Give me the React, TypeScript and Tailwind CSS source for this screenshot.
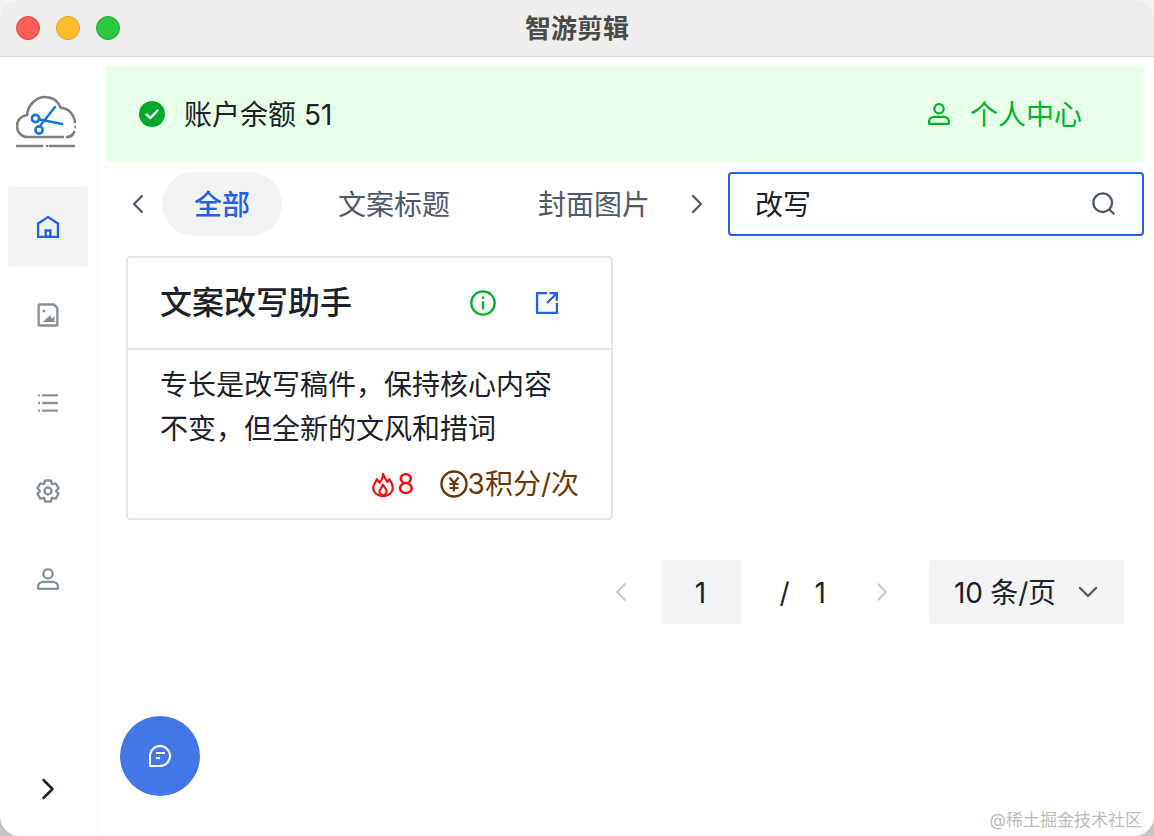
import { ChevronDown, ChevronLeft, ChevronRight } from 'lucide-react';

const NAV_PATHS = {
  settings:
    'M18.797 6.732A1 1 0 0 1 19.76 6h8.48a1 1 0 0 1 .964.732l1.285 4.628a1 1 0 0 0 1.213.7l4.651-1.2a1 1 0 0 1 1.116.468l4.24 7.344a1 1 0 0 1-.153 1.2L38.193 23.3a1 1 0 0 0 0 1.402l3.364 3.427a1 1 0 0 1 .153 1.2l-4.24 7.344a1 1 0 0 1-1.116.468l-4.65-1.2a1 1 0 0 0-1.214.7l-1.285 4.628a1 1 0 0 1-.964.732h-8.48a1 1 0 0 1-.963-.732L17.51 36.64a1 1 0 0 0-1.213-.7l-4.65 1.2a1 1 0 0 1-1.116-.468l-4.24-7.344a1 1 0 0 1 .153-1.2L9.809 24.7a1 1 0 0 0 0-1.402l-3.364-3.427a1 1 0 0 1-.153-1.2l4.24-7.344a1 1 0 0 1 1.116-.468l4.65 1.2a1 1 0 0 0 1.213-.7l1.286-4.628Z',
  user: 'M7 37c0-4.97 4.03-8 9-8h16c4.97 0 9 3.03 9 8v3a1 1 0 0 1-1 1H8a1 1 0 0 1-1-1v-3Z',
  search:
    'M33.072 33.071c6.248-6.248 6.248-16.379 0-22.627-6.249-6.249-16.38-6.249-22.628 0-6.248 6.248-6.248 16.379 0 22.627 6.248 6.248 16.38 6.248 22.628 0Zm0 0 8.485 8.485',
};

function Icon({ className, children }: { className: string; children: React.ReactNode }) {
  return (
    <svg
      viewBox="0 0 48 48"
      fill="none"
      stroke="currentColor"
      strokeWidth={4}
      className={className}
    >
      {children}
    </svg>
  );
}

function HomeIcon() {
  return (
    <Icon className="w-7 h-7">
      <path d="M7 18 24 7l17 11v23H7V18Z" />
      <path d="M20 30h8v11h-8z" />
    </Icon>
  );
}

function ImageFileIcon() {
  return (
    <Icon className="w-7 h-7">
      <path d="M8 7a1 1 0 0 1 1-1h25l6 6v29a1 1 0 0 1-1 1H9a1 1 0 0 1-1-1V7Z" />
      <path d="M15 36 28 24l2 6 5-3v9H15Z" fill="currentColor" stroke="none" />
      <circle cx="17" cy="17" r="2.5" fill="currentColor" stroke="none" />
    </Icon>
  );
}

function ListIcon() {
  return (
    <Icon className="w-7 h-7">
      <path d="M14 11h27M14 24h27M14 37h27" />
      <path d="M7 11h3M7 24h3M7 37h3" />
    </Icon>
  );
}

function SettingsIcon() {
  return (
    <Icon className="w-7 h-7">
      <path d={NAV_PATHS.settings} />
      <circle cx="24" cy="24" r="6" />
    </Icon>
  );
}

function UserIcon() {
  return (
    <Icon className="w-7 h-7">
      <path d={NAV_PATHS.user} />
      <circle cx="24" cy="15" r="8" />
    </Icon>
  );
}

function Logo() {
  return (
    <svg viewBox="0 0 60 54" fill="none" className="w-[60px] h-[54px]">
      <path
        d="M47 42H12C5 42 1 37 1 31c0-6 4-10 10-11C12 10 20 2 29 2c7 0 13 4 16 11 7 0 13 6 14 14M58 37c-1 3-4 5-7 5"
        stroke="#7f7f7f"
        strokeWidth={2.6}
        strokeLinecap="round"
      />
      <path d="M59.5 32v.1" stroke="#7f7f7f" strokeWidth={2.6} strokeLinecap="round" />
      <path d="M1 51h25M31 51h.1M34 51h24" stroke="#7f7f7f" strokeWidth={2.6} strokeLinecap="round" />
      <path d="M39 12 24 31M21 24l25 5" stroke="#0f78d8" strokeWidth={2.4} strokeLinecap="round" />
      <circle cx="19.5" cy="23.5" r="3.6" stroke="#0f78d8" strokeWidth={2.6} fill="#fff" />
      <circle cx="23" cy="35" r="3.6" stroke="#0f78d8" strokeWidth={2.6} fill="#fff" />
    </svg>
  );
}

function SideNav() {
  const items = [
    { icon: <HomeIcon />, active: true },
    { icon: <ImageFileIcon /> },
    { icon: <ListIcon /> },
    { icon: <SettingsIcon /> },
    { icon: <UserIcon /> },
  ];

  return (
    <aside className="w-[97px] shrink-0 flex flex-col px-2 shadow-[3px_0_5px_rgba(0,0,0,0.02)] border-r border-[#f7f7f7]">
      <div className="h-[130px] shrink-0 flex items-center pl-[8px]">
        <Logo />
      </div>
      <nav className="flex flex-col gap-2">
        {items.map((item, i) => (
          <div
            key={i}
            className={
              item.active
                ? 'w-20 h-20 rounded-[4px] flex items-center justify-center bg-[#f2f3f5] text-[#2560e8]'
                : 'w-20 h-20 rounded-[4px] flex items-center justify-center text-[#86909c]'
            }
          >
            {item.icon}
          </div>
        ))}
      </nav>
      <div className="mt-auto h-[94px] w-20 flex items-center justify-center text-[#1d2129]">
        <ChevronRight size={36} strokeWidth={1.7} />
      </div>
    </aside>
  );
}

function Banner() {
  return (
    <div className="h-24 bg-[#e8ffea] flex items-center pl-[33px] pr-[62px] text-[28px]">
      <svg viewBox="0 0 26 26" className="w-[26px] h-[26px]">
        <circle cx="13" cy="13" r="13" fill="#00a92c" />
        <path
          d="M7.5 13.5l4 3.5 7-7.5"
          fill="none"
          stroke="#fff"
          strokeWidth={2.4}
          strokeLinecap="round"
          strokeLinejoin="round"
        />
      </svg>
      <span className="ml-[19px] pt-[2px] text-[#1d2129]">账户余额 51</span>
      <div className="ml-auto flex items-center text-[#00b42a]">
        <UserIcon />
        <span className="ml-[17px] pt-[2px]">个人中心</span>
      </div>
    </div>
  );
}

function TabBar() {
  return (
    <div className="mt-[10px] h-16 flex items-center text-[28px] text-[#4e5969]">
      <div className="w-[56px] shrink-0 flex items-center justify-end pr-[8px]">
        <ChevronLeft size={32} strokeWidth={1.7} />
      </div>
      <div className="h-16 rounded-full bg-[#f2f3f5] text-[#2560e8] font-medium flex items-center px-8 pt-[2px]">全部</div>
      <div className="px-8 ml-[24px] pt-[2px]">文案标题</div>
      <div className="px-8 ml-[24px] pt-[2px]">封面图片</div>
      <div className="w-[46px] shrink-0 flex items-center justify-center -ml-[8px]">
        <ChevronRight size={32} strokeWidth={1.7} />
      </div>
      <div className="ml-auto w-[416px] h-16 border-2 border-[#2560e8] rounded-[4px] flex items-center pl-[25px] pr-[24px] text-[#1d2129]">
        <span className="pt-[2px]">改写</span>
        <Icon className="ml-auto w-7 h-7 text-[#4e5969]">
          <path d={NAV_PATHS.search} />
        </Icon>
      </div>
    </div>
  );
}

function ToolCard() {
  return (
    <div className="ml-[20px] mt-[20px] w-[487px] h-[264px] border-2 border-[#e5e6eb] rounded-[4px] bg-white">
      <div className="h-[92px] border-b-2 border-[#e5e6eb] flex items-center pl-[32px] pr-[50px]">
        <span className="text-[32px] font-medium text-[#1d2129]">文案改写助手</span>
        <svg viewBox="0 0 48 48" fill="none" className="ml-auto w-7 h-7 text-[#00b42a]" stroke="currentColor" strokeWidth={4}>
          <circle cx="24" cy="24" r="20" />
          <path d="M24 21v14M24 13v4" />
        </svg>
        <Icon className="ml-[36px] w-7 h-7 text-[#2560e8]">
          <path d="M24 7H7v34h34V24M39 9 24 24M28 7h13v13" />
        </Icon>
      </div>
      <div className="pl-[32px] pr-[50px] pt-[13px] text-[28px] leading-[44px] text-[#1d2129]">
        专长是改写稿件，保持核心内容不变，但全新的文风和措词
      </div>
      <div className="mt-[15px] pr-[32px] flex justify-end items-center text-[28px] leading-[36px]">
        <span className="flex items-center text-[#f00e0e]">
          <svg viewBox="0 0 24 28" fill="none" className="w-[22px] h-[25px]" stroke="currentColor" strokeWidth={2.4} strokeLinejoin="round">
            <path d="M12 2c1 5 3 6 5 9l2-3c3 4 4 7 4 10 0 5-5 9-11 9S1 23 1 18c0-4 3-6 4-10l3 4c3-3 4-6 4-10Z" />
            <path d="M12 14c1 3 4 4 4 8 0 2-2 4-4 4s-4-2-4-4c0-3 3-4 4-8Z" />
          </svg>
          <span className="ml-[3px]">8</span>
        </span>
        <span className="ml-[25px] flex items-center text-[#6f3606]">
          <svg viewBox="0 0 28 28" fill="none" className="w-[28px] h-[28px]" stroke="currentColor">
            <circle cx="14" cy="14" r="12.5" strokeWidth={2.4} />
            <path d="M9.5 7.5 14 13l4.5-5.5M14 13v8.5M9.5 14h9M9.5 18h9" strokeWidth={2.2} />
          </svg>
          3积分/次
        </span>
      </div>
    </div>
  );
}

function Pagination() {
  return (
    <div className="mt-[40px] pr-[20px] h-16 flex items-center justify-end text-[28px] text-[#1d2129]">
      <ChevronLeft size={32} strokeWidth={1.7} className="text-[#c9cdd4]" />
      <div className="ml-[24px] w-20 h-16 rounded-[4px] bg-[#f2f3f5] flex items-center justify-center pt-[2px]">1</div>
      <span className="ml-[39px] pt-[2px]">/</span>
      <span className="ml-[25px] pt-[2px]">1</span>
      <ChevronRight size={32} strokeWidth={1.7} className="ml-[40px] text-[#c9cdd4]" />
      <div className="ml-[31px] w-[195px] h-16 rounded-[4px] bg-[#f2f3f5] flex items-center pl-[25px]">
        <span className="pt-[2px] tracking-[-0.2px]">10 条/页</span>
        <ChevronDown size={32} strokeWidth={1.7} className="ml-[16px] text-[#4e5969]" />
      </div>
    </div>
  );
}

export default function App() {
  return (
    <div
      className="relative w-[1154px] h-[836px] overflow-hidden bg-gradient-to-b from-[#f4f4f4] to-[#c4c4c4]"
      style={{ fontFamily: 'Inter, "Noto Sans CJK SC", sans-serif' }}
    >
      <div className="w-full h-full rounded-[20px] overflow-hidden bg-white flex flex-col">
        <header className="relative h-[57px] shrink-0 bg-[#f0eeec] border-b border-[#d9d8d6] flex items-center pl-4 gap-4">
          <span className="w-6 h-6 rounded-full bg-[#ff5f57] border border-[#e0443e]" />
          <span className="w-6 h-6 rounded-full bg-[#febc2e] border border-[#dea123]" />
          <span className="w-6 h-6 rounded-full bg-[#28c840] border border-[#1aab29]" />
          <div className="absolute inset-0 flex items-center justify-center text-[26px] font-semibold text-[#4a4a4a]">
            智游剪辑
          </div>
        </header>
        <div className="flex-1 flex min-h-0">
          <SideNav />
          <main className="flex-1 min-w-0 pt-[9px] pl-[9px] pr-[10px]">
            <Banner />
            <TabBar />
            <ToolCard />
            <Pagination />
          </main>
        </div>
      </div>
      <button className="absolute left-[120px] top-[716px] w-20 h-20 rounded-full bg-[#4477e6] flex items-center justify-center">
        <svg viewBox="0 0 24 24" fill="none" stroke="#fff" strokeWidth={2} className="w-6 h-6">
          <path d="M2 22V12a10 10 0 1 1 10 10H2Z" />
          <path d="M8 9h9M8 14h4" />
        </svg>
      </button>
      <div className="absolute right-[12px] bottom-[3px] text-[17px] leading-[26px] text-[#bdbdbd]">@稀土掘金技术社区</div>
    </div>
  );
}
